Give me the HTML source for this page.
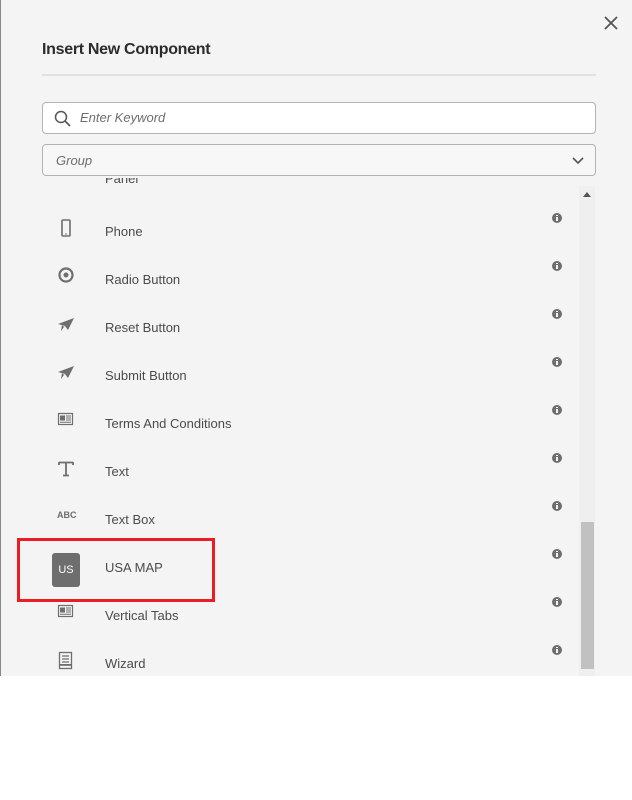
<!DOCTYPE html>
<html><head><meta charset="utf-8"><style>
*{margin:0;padding:0;box-sizing:border-box}
body{width:632px;height:800px;background:#fff;font-family:"Liberation Sans",sans-serif;position:relative;overflow:hidden}
#panel{position:absolute;left:0;top:0;width:632px;height:676px;background:#f4f4f4;border-left:1px solid #888}
.abs{position:absolute}
h1{position:absolute;left:41px;top:41px;font-size:16px;font-weight:bold;color:#2c2c2c;letter-spacing:-0.3px}
.rule{left:41px;top:74px;width:554px;height:2px;background:#e1e1e1}
.field{left:41px;width:554px;height:32px;background:#fff;border:1px solid #b3b3b3;border-radius:4px}
.ph{position:absolute;font-style:italic;font-size:13px;color:#6e6e6e}
#list{position:absolute;left:0;top:178px;width:632px;height:498px;overflow:hidden}
.lbl{position:absolute;left:104px;font-size:13px;color:#4b4b4b}
.ic{position:absolute;left:55px;width:20px;height:20px}
.info{position:absolute;left:551px;width:10px;height:10px;border-radius:50%;background:#6e6e6e}
.info:after{content:"";position:absolute;left:4px;top:4px;width:2px;height:4px;background:#f4f4f4}
.info:before{content:"";position:absolute;left:4px;top:2px;width:2px;height:1px;background:#f4f4f4}
</style></head><body>
<div id="panel">
<svg class="abs" style="left:603px;top:16px" width="14" height="14" viewBox="0 0 14 14"><path d="M1 1L13 13M13 1L1 13" stroke="#555" stroke-width="1.8"/></svg>
<h1>Insert New Component</h1>
<div class="abs rule"></div>
<div class="abs field" style="top:102px">
<svg class="abs" style="left:11px;top:7px" width="18" height="18" viewBox="0 0 18 18"><circle cx="7" cy="7" r="5.5" fill="none" stroke="#555" stroke-width="1.5"/><path d="M11 11L16 16" stroke="#555" stroke-width="1.6"/></svg>
<span class="ph" style="left:37px;top:7px">Enter Keyword</span></div>
<div class="abs field" style="top:144px;background:#f7f7f7">
<span class="ph" style="left:13px;top:8px">Group</span>
<svg class="abs" style="left:529px;top:10px" width="12" height="10" viewBox="0 0 12 10"><path d="M1 3L6 8L11 3" fill="none" stroke="#555" stroke-width="1.6"/></svg></div>
<div class="abs" style="left:578px;top:186px;width:16px;height:490px;background:#efefef"></div>
<svg class="abs" style="left:582px;top:192px" width="8" height="5"><path d="M0 5L4 0L8 5Z" fill="#555"/></svg>
<div class="abs" style="left:580px;top:522px;width:13px;height:147px;background:#c1c1c1"></div>
<div id="list">
<div class="lbl" style="top:-7px">Panel</div>

<svg class="ic" style="top:41px" viewBox="0 0 20 20"><rect x="6" y="1" width="8" height="16" rx="1" fill="none" stroke="#6e6e6e" stroke-width="1.6"/><rect x="9" y="14.5" width="2" height="1" fill="#6e6e6e"/></svg>
<div class="lbl" style="top:46px">Phone</div><div class="info" style="top:35px"></div>

<svg class="ic" style="top:89px" viewBox="0 0 20 20"><circle cx="10" cy="8" r="6.5" fill="none" stroke="#6e6e6e" stroke-width="2.2"/><circle cx="10" cy="8" r="2.5" fill="#6e6e6e"/></svg>
<div class="lbl" style="top:94px">Radio Button</div><div class="info" style="top:83px"></div>

<svg class="ic" style="top:137px" viewBox="0 0 20 20"><path d="M2 9L18 3L12 15L9 11Z" fill="#6e6e6e"/><path d="M9 11L18 3L6 14Z" fill="#8a8a8a"/><path d="M6 10L5 16L8 12Z" fill="#6e6e6e"/></svg>
<div class="lbl" style="top:142px">Reset Button</div><div class="info" style="top:131px"></div>

<svg class="ic" style="top:185px" viewBox="0 0 20 20"><path d="M2 9L18 3L12 15L9 11Z" fill="#6e6e6e"/><path d="M9 11L18 3L6 14Z" fill="#8a8a8a"/><path d="M6 10L5 16L8 12Z" fill="#6e6e6e"/></svg>
<div class="lbl" style="top:190px">Submit Button</div><div class="info" style="top:179px"></div>

<svg class="ic" style="top:233px" viewBox="0 0 20 20"><rect x="2.5" y="2.5" width="14" height="11" fill="none" stroke="#6e6e6e" stroke-width="1.2"/><rect x="4" y="4.5" width="5" height="5" fill="#6e6e6e"/><path d="M10 5h5M10 7h5M10 9h5M4 11.3h11" stroke="#6e6e6e" stroke-width="1"/></svg>
<div class="lbl" style="top:238px">Terms And Conditions</div><div class="info" style="top:227px"></div>

<svg class="ic" style="top:281px" viewBox="0 0 20 20"><path d="M3 3.5h14M10 3.5v13M7 16.5h6M3 3v3M17 3v3" fill="none" stroke="#6e6e6e" stroke-width="1.8"/></svg>
<div class="lbl" style="top:286px">Text</div><div class="info" style="top:275px"></div>

<div style="position:absolute;left:56px;top:332px;font-size:9px;font-weight:bold;color:#6e6e6e">ABC</div>
<div class="lbl" style="top:334px">Text Box</div><div class="info" style="top:323px"></div>

<div style="position:absolute;left:51px;top:375px;width:28px;height:34px;border-radius:3px;background:#6e6e6e;color:#fff;font-size:11px;text-align:center;line-height:34px">US</div>
<div class="lbl" style="top:382px">USA MAP</div><div class="info" style="top:371px"></div>

<svg class="ic" style="top:425px" viewBox="0 0 20 20"><rect x="2.5" y="2.5" width="14" height="11" fill="none" stroke="#6e6e6e" stroke-width="1.2"/><rect x="4" y="4.5" width="5" height="5" fill="#6e6e6e"/><path d="M10 5h5M10 7h5M10 9h5M4 11.3h11" stroke="#6e6e6e" stroke-width="1"/></svg>
<div class="lbl" style="top:430px">Vertical Tabs</div><div class="info" style="top:419px"></div>

<svg class="ic" style="top:473px" viewBox="0 0 20 20"><rect x="3.5" y="1.5" width="12" height="16" fill="none" stroke="#6e6e6e" stroke-width="1.3"/><path d="M6 5h7M6 8h7M6 11h7" stroke="#6e6e6e" stroke-width="1.2"/><rect x="3.5" y="13" width="12" height="1.8" fill="#6e6e6e"/></svg>
<div class="lbl" style="top:478px">Wizard</div><div class="info" style="top:467px"></div>
</div>
</div>
<div class="abs" style="left:17px;top:538px;width:198px;height:64px;border:3px solid #ed1c24"></div>
</body></html>
